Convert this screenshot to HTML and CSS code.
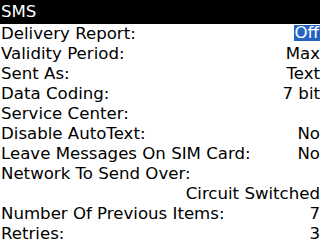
FILE: index.html
```html
<!DOCTYPE html>
<html>
<head>
<meta charset="utf-8">
<link rel="stylesheet" href="styles.css">
</head>
<body>
<div class="title">SMS</div>
<div class="list">
  <div class="row"><span class="label">Delivery Report:</span><span class="value sel">Off</span></div>
  <div class="row"><span class="label">Validity Period:</span><span class="value">Max</span></div>
  <div class="row"><span class="label">Sent As:</span><span class="value">Text</span></div>
  <div class="row"><span class="label">Data Coding:</span><span class="value">7 bit</span></div>
  <div class="row"><span class="label">Service Center:</span></div>
  <div class="row"><span class="label">Disable AutoText:</span><span class="value">No</span></div>
  <div class="row"><span class="label">Leave Messages On SIM Card:</span><span class="value">No</span></div>
  <div class="row"><span class="label">Network To Send Over:</span></div>
  <div class="row end"><span class="value">Circuit Switched</span></div>
  <div class="row"><span class="label">Number Of Previous Items:</span><span class="value">7</span></div>
  <div class="row"><span class="label">Retries:</span><span class="value">3</span></div>
</div>
</body>
</html>
```
FILE: styles.css
```css
html, body {
  margin: 0;
  padding: 0;
  background: #fff;
  width: 320px;
  height: 240px;
  overflow: hidden;
}
body {
  font-family: "DejaVu Sans", sans-serif;
  font-size: 16.6px;
  color: #000;
}
.title {
  background: #000;
  color: #fff;
  height: 24px;
  line-height: 24px;
  padding-left: 1px;
}
.list {
  display: flex;
  flex-direction: column;
}
.row {
  display: flex;
  justify-content: space-between;
  height: 20px;
  line-height: 20px;
  white-space: nowrap;
}
.row.end {
  justify-content: flex-end;
}
.label {
  padding-left: 1px;
}
.value.sel {
  background: #2463c2;
  color: #fff;
  line-height: 16px;
  height: 16px;
  align-self: flex-start;
  margin-top: 1px;
  padding: 0 1px;
}
```
